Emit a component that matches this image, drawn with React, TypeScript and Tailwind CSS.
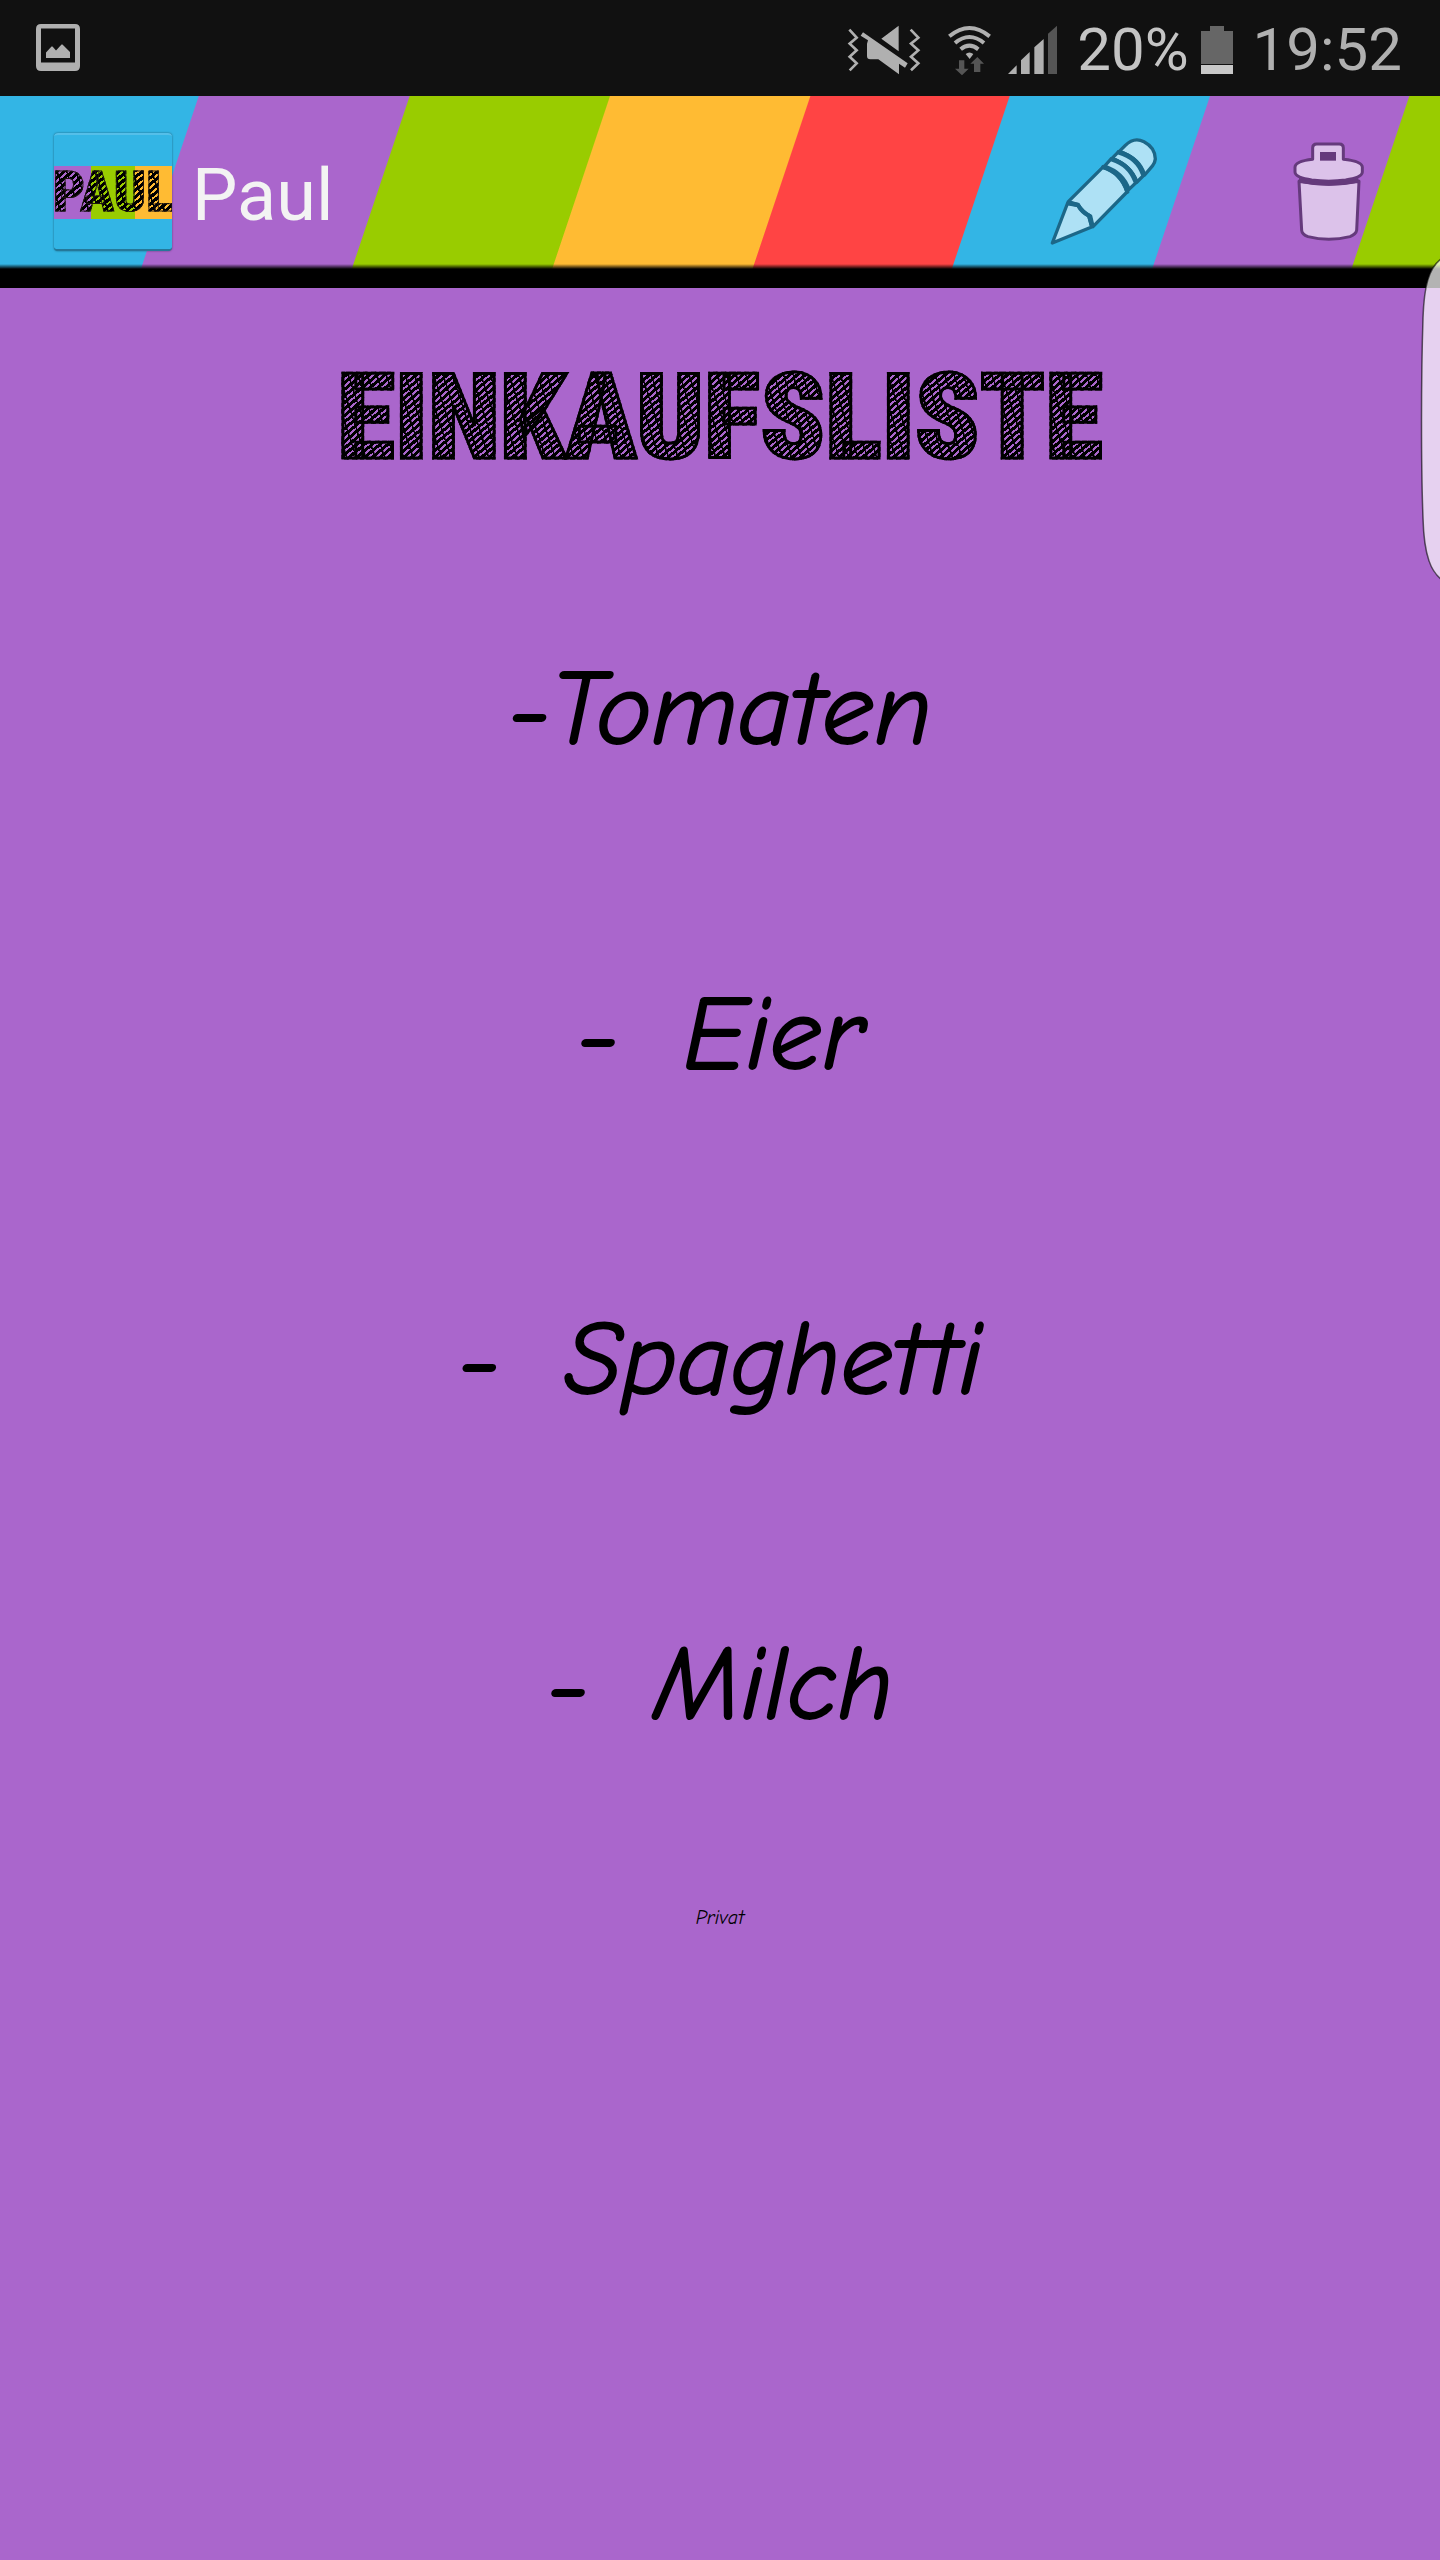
const hatch =
  "bg-[repeating-linear-gradient(72deg,#000_0,#000_1px,transparent_2px,transparent_9px),repeating-linear-gradient(140deg,#000_0,#000_3px,transparent_3px,transparent_5px)] bg-clip-text text-transparent";

function ImageIcon() {
  return (
    <svg viewBox="0 0 44 48" className="h-12 w-11" aria-hidden="true">
      <path
        fill="#b0b0b0"
        fillRule="evenodd"
        d="M5 0h34q5 0 5 5v37q0 5-5 5H5q-5 0-5-5V5q0-5 5-5zm0 4.500v34h34v-34z"
      />
      <path fill="#b0b0b0" d="M10 34v-5.500l5.500-6h1l3.500 4 5.500-6h1l7.500 7.500v6z" />
    </svg>
  );
}

function MuteIcon() {
  return (
    <svg viewBox="18 36 222 150" className="h-[50px] w-[74px]" aria-hidden="true">
      <g fill="none" stroke="#b0b0b0" strokeWidth="8">
        <path d="M25 50l22 24-21 18 21 20-21 19 21 20-21 21M209 50l23 24-22 18 22 20-22 19 22 20-22 21" />
      </g>
      <path fill="#b0b0b0" d="M173 38v77l-52-38zM66 58l134 93-8 13-18-12v32l-62-45H88q-10 0-10-10V92l3-10-22-14z" />
    </svg>
  );
}

function WifiIcon() {
  return (
    <svg viewBox="318 33 135 153" className="h-[51px] w-[45px]" aria-hidden="true">
      <g fill="none" stroke="#b0b0b0" strokeWidth="12">
        <path d="M325 67q60-50 121 0M342 87q43-36 87 0M359 106q26-22 53 0" />
      </g>
      <path fill="#b0b0b0" d="M374 120q11-9 23 0l-11 15z" />
      <path fill="#555" d="M354 139h16v25h13l-20 20-21-20h12zM409 129l20 20h-11v25h-19v-25h-11z" />
    </svg>
  );
}

function SignalIcon() {
  return (
    <svg viewBox="498 36 147 150" className="h-[50px] w-[49px]" aria-hidden="true">
      <path fill="#b0b0b0" d="M498 183l26-26v26zM537 183v-41l26-25v66zM577 183v-80l28-25v105z" />
      <path fill="#555" d="M618 183V62l27-24v145z" />
    </svg>
  );
}

function BatteryIcon() {
  return (
    <svg viewBox="0 0 32 50" className="h-[50px] w-8" aria-hidden="true">
      <path fill="#666" d="M9 1h14v5h9v33H0V6h9z" />
      <path fill="#c8c8c8" d="M0 40h32v9H0z" />
    </svg>
  );
}

function PencilIcon() {
  return (
    <svg viewBox="144 136 336 336" className="size-28" aria-hidden="true">
      <g fill="#aee1f5" stroke="#1c6788" strokeWidth="10" strokeLinejoin="round" strokeLinecap="round">
        <path d="M358 182l18-18q26-26 56-11 34 18 34 52-1 10-8 20l-24 28q-14-50-76-71z" />
        <path d="M336 203l20-20q60 16 76 70l-21 21q-18-50-75-71z" />
        <path d="M314 226l20-22q58 18 76 70l-23 22q-16-50-73-70z" />
        <path d="M205 333l103-103q54 16 73 74L279 408l-7-32q-22-10-38-34z" />
        <path d="M203 337l-46 120 118-48-8-32q-22-14-33-33z" />
        <path fill="none" strokeWidth="13" d="M310 229q54 16 72 74M336 206q52 16 70 66M356 185q56 16 73 66M206 338l28 5q12 22 33 32l9 30" />
      </g>
    </svg>
  );
}

function TrashIcon() {
  return (
    <svg viewBox="870 144 234 312" className="h-[104px] w-[78px]" aria-hidden="true">
      <g fill="#dcc2ea" stroke="#653a7c" strokeWidth="9" strokeLinejoin="round">
        <path d="M897 268q90 18 180 0l-7 147q-2 12-20 19-64 16-126 0-18-7-19-19z" />
        <path strokeWidth="14" d="M896 265q90 18 180 0" />
        <path d="M938 202v-34q0-12 12-12h68q12 0 12 12v34q57 6 57 24v14q0 16-50 24-51 7-102 0-50-8-50-24v-14q0-18 53-24z" />
        <path fill="#653a7c" stroke="none" d="M960 180h48v26h-48z" />
      </g>
    </svg>
  );
}

function AppLogo() {
  return (
    <div className="flex h-[118px] w-[118px] flex-col justify-center overflow-hidden rounded border-t-2 border-b-2 border-t-[#55bfe9] border-b-[#24789a] bg-[#33b5e5] shadow-[0_0_2px_rgba(0,0,0,0.5)]">
      <div className="flex h-[53px] items-center justify-center bg-[linear-gradient(90deg,#aa66cc_31%,#99cc00_31%,#99cc00_69%,#ffbb33_69%)]">
        <span
          className={`font-['Roboto_Condensed',Roboto,sans-serif] text-[56px] leading-[53px] font-black [-webkit-text-stroke:1px_#1c1410] ${hatch}`}
        >
          PAUL
        </span>
      </div>
    </div>
  );
}

const items = [
  { word: "Tomaten", spaced: false },
  { word: "Eier", spaced: true },
  { word: "Spaghetti", spaced: true },
  { word: "Milch", spaced: true },
];

export default function App() {
  return (
    <div className="relative flex min-h-screen flex-col overflow-hidden bg-[#aa66cc] font-[Roboto,sans-serif]">
      <div className="flex h-24 items-center justify-between bg-[#111] pr-[38px] pl-9">
        <ImageIcon />
        <div className="flex items-center pt-1 text-[60px] leading-[70px]">
          <MuteIcon />
          <span className="ml-[26px]"><WifiIcon /></span>
          <span className="ml-4"><SignalIcon /></span>
          <span className="ml-5 text-[#c4c4c4]">20%</span>
          <span className="ml-3"><BatteryIcon /></span>
          <time className="ml-5 text-[#b0b0b0]">19:52</time>
        </div>
      </div>

      <header className="flex h-48 items-center justify-between bg-[linear-gradient(180deg,transparent_168px,#000_173px),linear-gradient(108.5deg,#33b5e5_188px,#aa66cc_189px,#aa66cc_388px,#99cc00_389px,#99cc00_578px,#ffbb33_579px,#ffbb33_768px,#ff4444_769px,#ff4444_957px,#33b5e5_958px,#33b5e5_1147px,#aa66cc_1148px,#aa66cc_1336px,#99cc00_1337px)] pr-[72px] pl-[54px]">
        <div className="flex items-center gap-5">
          <AppLogo />
          <h1 className="pt-2 text-[72px] leading-[84px] text-[#f3f3f3]">Paul</h1>
        </div>
        <div className="flex items-center gap-[130px]">
          <button type="button" aria-label="Bearbeiten"><PencilIcon /></button>
          <button type="button" aria-label="Löschen"><TrashIcon /></button>
        </div>
      </header>

      <main className="flex flex-1 flex-col items-center pt-15 text-black">
        <h2
          className={`font-['Roboto_Condensed',Roboto,sans-serif] text-[118px] leading-[140px] font-black [-webkit-text-stroke:3px_#000] ${hatch}`}
        >
          EINKAUFSLISTE
        </h2>
        <ul className="mt-15 font-['Comic_Neue',Lato,cursive] text-[104px] leading-[325px] italic [-webkit-text-stroke:2px_#000]">
          {items.map((item) => (
            <li key={item.word} className={item.spaced ? "flex justify-center gap-16" : "flex justify-center"}>
              <span>-</span>
              <span>{item.word}</span>
            </li>
          ))}
        </ul>
        <p className="mt-14 font-['Comic_Neue',Lato,cursive] text-xl leading-7 italic">Privat</p>
      </main>

      <button type="button" aria-label="Seitenleiste" className="absolute top-[258px] right-0">
        <svg viewBox="0 0 20 322" className="h-[322px] w-5" aria-hidden="true">
          <path
            d="M21 1C9 10 4 28 3 60C1 120 1 210 3 260C4 300 12 314 21 321"
            fill="#fff"
            fillOpacity="0.7"
            stroke="#000"
            strokeOpacity="0.6"
            strokeWidth="1.500"
          />
        </svg>
      </button>
    </div>
  );
}
